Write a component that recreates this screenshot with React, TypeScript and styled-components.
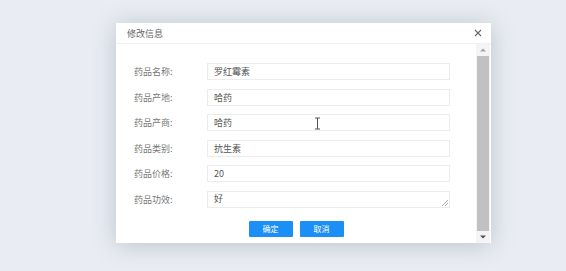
import React from 'react';
import styled, { createGlobalStyle } from 'styled-components';

const GlobalStyle = createGlobalStyle`
  html, body {
    margin: 0;
    padding: 0;
    background: #e9edf3;
    font-family: "Noto Sans CJK SC", "Noto Sans", sans-serif;
  }
`;

const Page = styled.div`
  width: 566px;
  height: 271px;
  padding: 23px 0 0 116px;
  box-sizing: border-box;
`;

const Dialog = styled.div`
  width: 375px;
  height: 220px;
  background: #fff;
  box-shadow: 0 2px 22px rgba(60, 70, 90, 0.25);
  display: flex;
  flex-direction: column;
`;

const Header = styled.div`
  height: 20px;
  flex-shrink: 0;
  display: flex;
  align-items: center;
  justify-content: space-between;
  padding: 0 9px 0 11px;
  border-bottom: 1px solid #f0f0f0;
`;

const Title = styled.span`
  font-size: 9px;
  color: #666;
`;

const Close = styled.span`
  display: flex;
  width: 8px;
  height: 8px;
`;

const Body = styled.div`
  flex: 1;
  display: flex;
  min-height: 0;
`;

const Content = styled.div`
  flex: 1;
  padding: 19px 26px 0 18px;
  display: flex;
  flex-direction: column;
`;

const Form = styled.div`
  display: grid;
  grid-template-columns: 73px 1fr;
  row-gap: 8.6px;
  align-items: center;
`;

const Label = styled.label`
  font-size: 9px;
  color: #777;
`;

const Field = styled.div<{ $area?: boolean }>`
  position: relative;
  height: 17px;
  box-sizing: border-box;
  border: 1px solid #ececec;
  padding: ${({ $area }) => ($area ? '1px 6px' : '0 6px')};
  display: flex;
  align-items: ${({ $area }) => ($area ? 'flex-start' : 'center')};
  font-size: 9px;
  color: #555;
  line-height: 11px;
`;

const Grip = styled.svg`
  position: absolute;
  right: 1px;
  bottom: 1px;
`;

const Caret = styled.svg`
  position: absolute;
  left: 106px;
  top: 2px;
`;

const Actions = styled.div`
  display: flex;
  justify-content: center;
  gap: 7px;
  margin-top: 13px;
  padding-left: 8px;
`;

const Button = styled.button`
  width: 44px;
  height: 16px;
  border: none;
  border-radius: 1px;
  background: #1b8ff6;
  color: #fff;
  font-family: inherit;
  font-size: 8px;
  padding: 0;
  line-height: 16px;
`;

const Scrollbar = styled.div`
  width: 14px;
  margin-right: 1px;
  background: #f4f4f4;
  display: flex;
  flex-direction: column;
  align-items: center;
`;

const Arrow = styled.div`
  height: 12px;
  display: flex;
  align-items: center;
  justify-content: center;
`;

const Thumb = styled.div`
  flex: 1;
  width: 12px;
  background: #c1c1c1;
`;

const rows = [
  { label: '药品名称:', value: '罗红霉素' },
  { label: '药品产地:', value: '哈药' },
  { label: '药品产商:', value: '哈药', caret: true },
  { label: '药品类别:', value: '抗生素' },
  { label: '药品价格:', value: '20' },
];

export default function App() {
  return (
    <Page>
      <GlobalStyle />
      <Dialog>
        <Header>
          <Title>修改信息</Title>
          <Close>
            <svg width="8" height="8" viewBox="0 0 8 8">
              <path d="M1 1 L7 7 M7 1 L1 7" stroke="#666" strokeWidth="1.1" />
            </svg>
          </Close>
        </Header>
        <Body>
          <Content>
            <Form>
              {rows.map((r) => (
                <React.Fragment key={r.label}>
                  <Label>{r.label}</Label>
                  <Field>
                    {r.value}
                    {r.caret && (
                      <Caret width="7" height="13" viewBox="0 0 7 13">
                        <path d="M1 1 H6 M3.5 1 V12 M1 12 H6" stroke="#555" strokeWidth="1" fill="none" />
                      </Caret>
                    )}
                  </Field>
                </React.Fragment>
              ))}
              <Label>药品功效:</Label>
              <Field $area>
                好
                <Grip width="7" height="7" viewBox="0 0 7 7">
                  <path d="M1 7 L7 1 M4 7 L7 4" stroke="#999" strokeWidth="0.8" />
                </Grip>
              </Field>
            </Form>
            <Actions>
              <Button>确定</Button>
              <Button>取消</Button>
            </Actions>
          </Content>
          <Scrollbar>
            <Arrow>
              <svg width="6" height="4" viewBox="0 0 6 4">
                <path d="M0 3.5 L3 0.5 L6 3.5 Z" fill="#a3a3a3" />
              </svg>
            </Arrow>
            <Thumb />
            <Arrow>
              <svg width="6" height="4" viewBox="0 0 6 4">
                <path d="M0 0.5 L3 3.5 L6 0.5 Z" fill="#505050" />
              </svg>
            </Arrow>
          </Scrollbar>
        </Body>
      </Dialog>
    </Page>
  );
}
